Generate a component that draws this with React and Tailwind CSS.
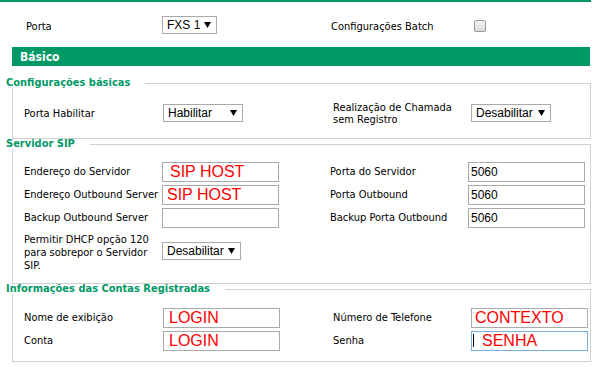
import React from 'react'

// Basic line configuration page (FXS port)

function Arrow() {
  return (
    <svg width="7" height="6" viewBox="0 0 7 6" className="shrink-0">
      <path d="M0 0h7L3.5 6z" fill="#000" />
    </svg>
  )
}

function Select({ label, className = '' }) {
  return (
    <div className={`flex items-center justify-between border border-[#a9a9a9] bg-white pl-[4px] pr-[5px] font-['Liberation_Sans',sans-serif] text-[12px] text-black ${className}`}>
      <span>{label}</span>
      <Arrow />
    </div>
  )
}

function Field({ value, red = false, focused = false, pad = 'pl-[2px]' }) {
  return (
    <div
      className={`flex h-[20px] w-[117px] items-center border bg-white ${pad} ${
        focused ? 'border-[#7aaee2]' : 'border-[#a9a9a9]'
      }`}
    >
      {focused && <span className="mr-[8px] h-[13px] w-px bg-black" />}
      {value && (
        <span
          className={
            red
              ? "font-['Liberation_Sans',sans-serif] text-[16px] leading-none text-[#ff0000]"
              : "font-['Liberation_Sans',sans-serif] text-[12px] leading-none text-black"
          }
        >
          {value}
        </span>
      )}
    </div>
  )
}

function Label({ children }) {
  return <span className="flex h-[23px] items-center pt-[2px]">{children}</span>
}

function Group({ title, children, className = '' }) {
  return (
    <fieldset className={`ml-[12px] w-[579px] border border-[#d0d0d0] p-0 ${className}`}>
      <legend className="-ml-[7px] bg-white pr-[15px] text-[11px] leading-[10px] font-bold text-[#009966]">
        {title}
      </legend>
      {children}
    </fieldset>
  )
}

export default function App() {
  return (
    <div className="w-[591px] bg-white font-['DejaVu_Sans_Condensed','DejaVu_Sans',sans-serif] text-[11px] text-black">
      <div className="h-[2px] bg-[#009966]" />

      <div className="grid h-[45px] grid-cols-[136px_169px_143px_1fr] items-center pl-[26px] pt-[2px]">
        <span className="pt-[4px]">Porta</span>
        <Select label="FXS 1" className="-mt-[2px] h-[18px] w-[55px]" />
        <span className="pt-[3px]">Configurações Batch</span>
        <div className="h-[12px] w-[12px] rounded-[2px] border border-[#9a9a9a] bg-gradient-to-b from-[#f4f4f4] to-[#dcdcdc]" />
      </div>

      <div className="ml-[12px] flex h-[19px] w-[578px] items-center bg-[#009966] pl-[8px] text-[12px] font-bold text-white">
        Básico
      </div>

      <Group title="Configurações básicas" className="mt-[12px]">
        <div className="grid h-[50px] grid-cols-[139px_170px_138px_1fr] items-center pl-[11px]">
          <Label>Porta Habilitar</Label>
          <Select label="Habilitar" className="h-[18px] w-[80px]" />
          <span className="pt-[2px] leading-[12px]">
            Realização de Chamada
            <br />
            sem Registro
          </span>
          <Select label="Desabilitar" className="h-[18px] w-[80px]" />
        </div>
      </Group>

      <Group title="Servidor SIP">
        <div className="grid grid-cols-[138px_168px_138px_117px] items-center pt-[11px] pb-[11px] pl-[11px]">
          <Label>Endereço do Servidor</Label>
          <Field value="SIP HOST" red pad="pl-[7px]" />
          <Label>Porta do Servidor</Label>
          <Field value="5060" />

          <Label>Endereço Outbound Server</Label>
          <Field value="SIP HOST" red pad="pl-[4px]" />
          <Label>Porta Outbound</Label>
          <Field value="5060" />

          <Label>Backup Outbound Server</Label>
          <Field />
          <Label>Backup Porta Outbound</Label>
          <Field value="5060" />

          <span className="mt-[3px] pt-[1px] leading-[13px]">
            Permitir DHCP opção 120
            <br />
            para sobrepor o Servidor
            <br />
            SIP.
          </span>
          <Select label="Desabilitar" className="mt-[1px] h-[18px] w-[79px]" />
          <span />
          <span />
        </div>
      </Group>

      <Group title="Informações das Contas Registradas">
        <div className="grid grid-cols-[139px_170px_138px_117px] items-center pt-[12px] pb-[9px] pl-[11px]">
          <Label>Nome de exibição</Label>
          <Field value="LOGIN" red pad="pl-[5px]" />
          <Label>Número de Telefone</Label>
          <Field value="CONTEXTO" red pad="pl-[3px]" />

          <Label>Conta</Label>
          <Field value="LOGIN" red pad="pl-[5px]" />
          <Label>Senha</Label>
          <Field value="SENHA" red focused pad="pl-[1px]" />
        </div>
      </Group>
    </div>
  )
}
